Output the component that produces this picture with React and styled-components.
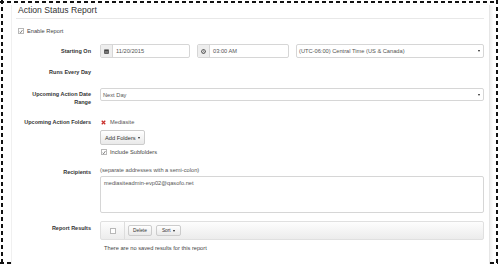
import React from 'react';
import styled, { createGlobalStyle } from 'styled-components';

const GlobalStyle = createGlobalStyle`
  html, body {
    margin: 0;
    padding: 0;
    background: #fff;
  }
  body {
    font-family: "Liberation Sans", Arial, sans-serif;
    color: #333;
  }
`;

const Frame = styled.div`
  box-sizing: border-box;
  width: 498px;
  height: 264px;
  padding: 4px 8px 0 11px;
  overflow: hidden;
  background-image:
    repeating-linear-gradient(90deg, #111 0 4px, transparent 4px 7px),
    repeating-linear-gradient(90deg, #111 0 4px, transparent 4px 7px),
    repeating-linear-gradient(180deg, #111 0 4px, transparent 4px 7px),
    repeating-linear-gradient(180deg, #111 0 4px, transparent 4px 7px);
  background-size: 100% 2px, 100% 2px, 2px 100%, 2px 100%;
  background-position: 0 1px, 0 262px, 1px 0, 496px 0;
  background-repeat: no-repeat;
`;

const Panel = styled.div`
  box-sizing: border-box;
  height: 100%;
  background: #fff;
  border-left: 1px solid #f0f0f0;
  border-right: 1px solid #e6e6e6;
  box-shadow: 2px 0 2px rgba(0, 0, 0, 0.05);
  padding: 0 5px 0 5px;
`;

const Title = styled.h2`
  margin: 1px 0 0 1px;
  font-size: 8.6px;
  line-height: 10px;
  font-weight: normal;
  color: #333;
`;

const Rule = styled.div`
  height: 1px;
  background: #e8e8e8;
  margin: 3px 0 0 -1px;
`;

const CheckRow = styled.label`
  display: flex;
  align-items: center;
  gap: 3px;
  height: 8px;
  margin: ${(p) => p.$mt || 0}px 0 0 ${(p) => p.$ml || 0}px;
  font-size: 5.7px;
  color: #444;
`;

const Box = styled.span`
  box-sizing: border-box;
  width: 6px;
  height: 6px;
  border: 1px solid #b8b8b8;
  background: #fff;
  display: flex;
  align-items: center;
  justify-content: center;
`;

const Row = styled.div`
  display: grid;
  grid-template-columns: 74px 1fr;
  column-gap: 9px;
  margin-top: ${(p) => p.$mt}px;
`;

const Label = styled.div`
  text-align: right;
  font-size: 5.5px;
  font-weight: bold;
  line-height: 8px;
  color: #333;
  padding-top: ${(p) => p.$pt || 0}px;
`;

const Controls = styled.div`
  display: flex;
  flex-direction: ${(p) => (p.$col ? 'column' : 'row')};
  align-items: flex-start;
  gap: ${(p) => p.$gap || 0}px;
`;

const InputGroup = styled.div`
  box-sizing: border-box;
  display: flex;
  width: ${(p) => p.$w}px;
  height: 14px;
  border: 1px solid #d6d6d6;
  border-radius: 2px;
  overflow: hidden;
`;

const Addon = styled.div`
  width: 11px;
  background: #eee;
  border-right: 1px solid #d6d6d6;
  display: flex;
  align-items: center;
  justify-content: center;
`;

const FieldText = styled.div`
  flex: 1;
  display: flex;
  align-items: center;
  padding-left: ${(p) => p.$pl || 3}px;
  font-size: 5.7px;
  color: #555;
  white-space: nowrap;
`;

const Select = styled.div`
  box-sizing: border-box;
  position: relative;
  display: flex;
  align-items: center;
  flex: ${(p) => (p.$grow ? 1 : 'none')};
  width: ${(p) => (p.$grow ? 'auto' : '100%')};
  height: ${(p) => p.$h}px;
  padding-left: 2px;
  border: 1px solid #d6d6d6;
  border-radius: 2px;
  font-size: 5.7px;
  color: #555;
  background: #fff;
`;

const Caret = styled.span`
  position: absolute;
  right: 3px;
  top: 50%;
  margin-top: -1px;
  width: 0;
  height: 0;
  border-left: 1.5px solid transparent;
  border-right: 1.5px solid transparent;
  border-top: 2px solid #222;
`;

const PlainLine = styled.div`
  display: flex;
  align-items: center;
  gap: ${(p) => p.$gap || 0}px;
  height: 8px;
  font-size: 5.7px;
  color: #555;
  padding-left: ${(p) => p.$pl || 0}px;
`;

const Button = styled.div`
  box-sizing: border-box;
  display: inline-flex;
  align-items: center;
  gap: 2px;
  height: ${(p) => p.$h}px;
  padding: 0 ${(p) => p.$px}px;
  border: 1px solid #ccc;
  border-radius: 2px;
  background: linear-gradient(#fff, #e9e9e9);
  font-size: ${(p) => p.$fs}px;
  color: #333;
`;

const SmallCaret = styled.span`
  width: 0;
  height: 0;
  border-left: 1.5px solid transparent;
  border-right: 1.5px solid transparent;
  border-top: 2px solid #222;
`;

const TextArea = styled.div`
  box-sizing: border-box;
  width: 100%;
  height: 37px;
  margin-top: 2px;
  padding: 3px 3px;
  border: 1px solid #d6d6d6;
  border-radius: 2px;
  font-size: 5.7px;
  color: #555;
`;

const Toolbar = styled.div`
  box-sizing: border-box;
  width: 100%;
  height: 19px;
  display: flex;
  align-items: center;
  border: 1px solid #e0e0e0;
  border-radius: 2px;
  background: linear-gradient(#fdfdfd, #ececec);
`;

const ToolCheck = styled.div`
  width: 23px;
  height: 100%;
  display: flex;
  align-items: center;
  justify-content: center;
  border-right: 1px solid #ddd;
`;

const ToolButtons = styled.div`
  display: flex;
  gap: 4px;
  padding-left: 3px;
`;

const Empty = styled.div`
  margin-top: 4px;
  padding-left: 4px;
  font-size: 5.7px;
  line-height: 8px;
  color: #444;
`;

const Tick = () => (
  <svg width="5" height="5" viewBox="0 0 10 10">
    <path d="M1.5 5.5 L4 8 L8.5 1.5" fill="none" stroke="#555" strokeWidth="1.8" />
  </svg>
);

const CalendarIcon = () => (
  <svg width="5" height="5" viewBox="0 0 10 10">
    <rect x="0.5" y="1" width="9" height="8.5" fill="#333" />
    <rect x="2" y="3.5" width="6" height="4.5" fill="#777" />
  </svg>
);

const ClockIcon = () => (
  <svg width="5" height="5" viewBox="0 0 10 10">
    <circle cx="5" cy="5" r="4.4" fill="#333" />
    <circle cx="5" cy="5" r="2.9" fill="#eee" />
    <path d="M5 3 V5 H6.5" fill="none" stroke="#333" strokeWidth="1" />
  </svg>
);

const RemoveIcon = () => (
  <svg width="5" height="5" viewBox="0 0 10 10">
    <path d="M1.5 1.5 L8.5 8.5 M8.5 1.5 L1.5 8.5" stroke="#c9302c" strokeWidth="2.6" />
  </svg>
);

export default function App() {
  return (
    <>
      <GlobalStyle />
      <Frame>
        <Panel>
          <Title>Action Status Report</Title>
          <Rule />

          <CheckRow $mt={8} $ml={1}>
            <Box>
              <Tick />
            </Box>
            Enable Report
          </CheckRow>

          <Row $mt={9}>
            <Label $pt={3}>Starting On</Label>
            <Controls $gap={7}>
              <InputGroup $w={90}>
                <Addon>
                  <CalendarIcon />
                </Addon>
                <FieldText>11/20/2015</FieldText>
              </InputGroup>
              <InputGroup $w={92}>
                <Addon>
                  <ClockIcon />
                </Addon>
                <FieldText>03:00 AM</FieldText>
              </InputGroup>
              <Select $grow $h={14}>
                (UTC-06:00) Central Time (US &amp; Canada)
                <Caret />
              </Select>
            </Controls>
          </Row>

          <Row $mt={10}>
            <Label>Runs Every Day</Label>
            <div />
          </Row>

          <Row $mt={12}>
            <Label $pt={2}>
              Upcoming Action Date
              <br />
              Range
            </Label>
            <Controls>
              <Select $h={13}>
                Next Day
                <Caret />
              </Select>
            </Controls>
          </Row>

          <Row $mt={12}>
            <Label>Upcoming Action Folders</Label>
            <Controls $col>
              <PlainLine $gap={4} $pl={1}>
                <RemoveIcon />
                Mediasite
              </PlainLine>
              <Button $h={15} $px={4} $fs={5.7} style={{ marginTop: 4 }}>
                Add Folders
                <SmallCaret />
              </Button>
              <CheckRow $mt={3} $ml={1}>
                <Box>
                  <Tick />
                </Box>
                Include Subfolders
              </CheckRow>
            </Controls>
          </Row>

          <Row $mt={10}>
            <Label $pt={2}>Recipients</Label>
            <Controls $col>
              <PlainLine>(separate addresses with a semi-colon)</PlainLine>
              <TextArea>mediasiteadmin-evp02@qasofo.net</TextArea>
            </Controls>
          </Row>

          <Row $mt={8}>
            <Label $pt={3}>Report Results</Label>
            <Controls $col>
              <Toolbar>
                <ToolCheck>
                  <Box />
                </ToolCheck>
                <ToolButtons>
                  <Button $h={11} $px={4} $fs={4.8}>
                    Delete
                  </Button>
                  <Button $h={11} $px={5} $fs={4.8}>
                    Sort
                    <SmallCaret />
                  </Button>
                </ToolButtons>
              </Toolbar>
              <Empty>There are no saved results for this report</Empty>
            </Controls>
          </Row>
        </Panel>
      </Frame>
    </>
  );
}
